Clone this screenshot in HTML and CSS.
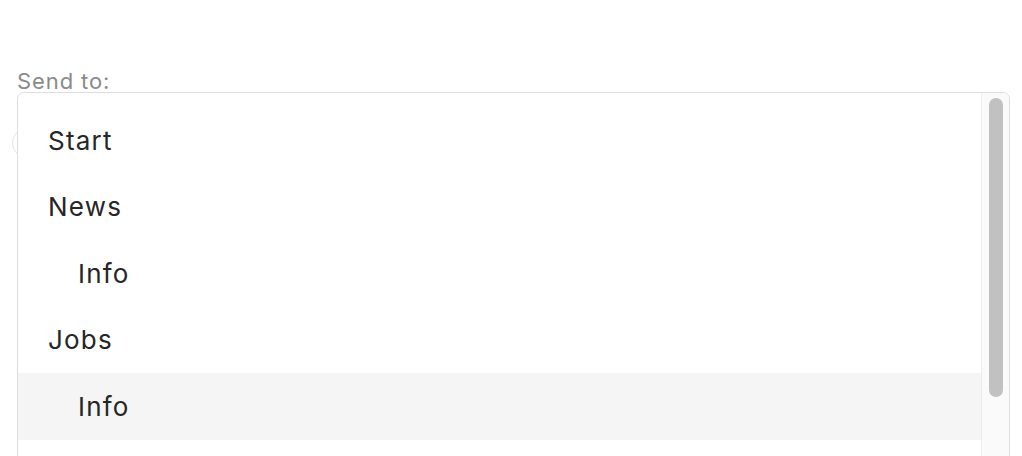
FILE: index.html
```html
<!DOCTYPE html>
<html lang="en">
<head>
<meta charset="utf-8">
<title>Send to</title>
<link rel="stylesheet" href="styles.css">
</head>
<body>
<div class="field">
  <label class="label">Send to:</label>
  <div class="control">
    <span class="ghost-toggle"></span>
    <div class="listbox">
      <ul class="options">
        <li class="option">Start</li>
        <li class="option">News</li>
        <li class="option sub">Info</li>
        <li class="option">Jobs</li>
        <li class="option sub active">Info</li>
      </ul>
      <div class="scrollbar"><div class="thumb"></div></div>
    </div>
  </div>
</div>
</body>
</html>
```

FILE: styles.css
```css
html, body {
  margin: 0;
  padding: 0;
  background: #ffffff;
  overflow: hidden;
  height: 456px;
}
body {
  font-family: "Inter", "DejaVu Sans", sans-serif;
  color: #222222;
}
.field {
  padding: 70px 12px 0 17px;
}
.label {
  display: block;
  font-size: 22px;
  line-height: 22px;
  color: #8a8a8a;
  letter-spacing: 0.9px;
}
.control {
  position: relative;
}
.ghost-toggle {
  position: absolute;
  left: -5px;
  top: 36px;
  width: 28px;
  height: 28px;
  border: 1px solid #e4e4e4;
  border-radius: 50%;
}
.listbox {
  position: relative;
  display: flex;
  height: 400px;
  border: 1px solid #dddddd;
  border-radius: 7px;
  background: #ffffff;
  overflow: hidden;
}
.options {
  flex: 1;
  list-style: none;
  margin: 0;
  padding: 14px 0 0 0;
}
.option {
  height: 66.5px;
  display: flex;
  align-items: center;
  padding-left: 30px;
  font-size: 26px;
  letter-spacing: 1.2px;
  color: #262626;
}
.option.sub {
  padding-left: 60px;
}
.option.active {
  background: #f5f5f5;
}
.scrollbar {
  width: 27px;
  border-left: 1px solid #ececec;
  background: #fafafa;
  padding-top: 5px;
  display: flex;
  justify-content: center;
}
.thumb {
  width: 14px;
  height: 299px;
  border-radius: 7px;
  background: #c1c1c1;
}
```
